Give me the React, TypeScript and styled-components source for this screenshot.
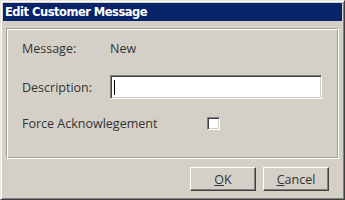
import styled, { createGlobalStyle } from "styled-components";

const GlobalStyle = createGlobalStyle`
	html, body {
		margin: 0;
		padding: 0;
		background: #d4d0c8;
	}
`;

const Window = styled.div`
	box-sizing: border-box;
	width: 345px;
	height: 200px;
	background: #d4d0c8;
	border-top: 1px solid #e8e6e1;
	border-left: 1px solid #e8e6e1;
	border-right: 1px solid #404040;
	border-bottom: 1px solid #404040;
	box-shadow: inset 1px 1px 0 #ffffff, inset -1px -1px 0 #808080;
	padding: 2px;
	display: flex;
	flex-direction: column;
	font-family: "Open Sans", "Noto Sans", sans-serif;
	font-size: 12.5px;
	color: #333333;
`;

const TitleBar = styled.div`
	height: 18px;
	background: #0a246a;
	color: #ffffff;
	font-family: "DejaVu Sans", "Liberation Sans", sans-serif;
	font-weight: bold;
	font-size: 11.5px;
	line-height: 18px;
	padding-left: 2px;
	letter-spacing: -0.5px;
`;

const Body = styled.div`
	flex: 1;
	display: flex;
	flex-direction: column;
	padding: 7px 3px 0 3px;
`;

const Panel = styled.div`
	box-sizing: border-box;
	height: 131px;
	border-top: 1px solid #a09d96;
	border-left: 1px solid #a09d96;
	border-right: 1px solid #ffffff;
	border-bottom: 1px solid #ffffff;
	box-shadow: inset 1px 1px 0 #ffffff, inset -1px -1px 0 #a09d96;
	padding: 7px 15px 0 15px;
	display: flex;
	flex-direction: column;
`;

const Row = styled.div<{ gap: number }>`
	display: flex;
	align-items: center;
	height: 24px;
	margin-top: ${(props) => props.gap}px;
`;

const Label = styled.span<{ width: number }>`
	width: ${(props) => props.width}px;
	flex-shrink: 0;
`;

const TextInput = styled.div`
	box-sizing: border-box;
	width: 212px;
	height: 24px;
	background: #ffffff;
	border-top: 1px solid #808080;
	border-left: 1px solid #808080;
	border-right: 1px solid #ffffff;
	border-bottom: 1px solid #ffffff;
	box-shadow: inset 1px 1px 0 #404040, inset -1px -1px 0 #d4d0c8;
	position: relative;
`;

const Caret = styled.span`
	position: absolute;
	left: 3px;
	top: 4px;
	width: 1px;
	height: 15px;
	background: #000000;
`;

const CheckBox = styled.div`
	box-sizing: border-box;
	width: 13px;
	height: 13px;
	margin-left: 46px;
	background: #ffffff;
	border-top: 1px solid #808080;
	border-left: 1px solid #808080;
	border-right: 1px solid #ffffff;
	border-bottom: 1px solid #ffffff;
	box-shadow: inset 1px 1px 0 #404040, inset -1px -1px 0 #d4d0c8;
`;

const ButtonRow = styled.div`
	display: flex;
	justify-content: flex-end;
	gap: 7px;
	padding: 8px 10px 0 0;
`;

const Button = styled.div`
	box-sizing: border-box;
	width: 66px;
	height: 24px;
	display: flex;
	align-items: center;
	justify-content: center;
	border-top: 1px solid #ffffff;
	border-left: 1px solid #ffffff;
	border-right: 1px solid #404040;
	border-bottom: 1px solid #404040;
	box-shadow: inset -1px -1px 0 #808080, inset 1px 1px 0 #d4d0c8;
	u {
		text-decoration: underline;
		text-underline-offset: 1px;
	}
`;

const App = () => {
	return (
		<>
			<GlobalStyle />
			<Window>
				<TitleBar>Edit Customer Message</TitleBar>
				<Body>
					<Panel>
						<Row gap={0}>
							<Label width={88}>Message:</Label>
							<span>New</span>
						</Row>
						<Row gap={15}>
							<Label width={88}>Description:</Label>
							<TextInput>
								<Caret />
							</TextInput>
						</Row>
						<Row gap={12}>
							<Label width={139}>Force Acknowlegement</Label>
							<CheckBox />
						</Row>
					</Panel>
					<ButtonRow>
						<Button>
							<span><u>O</u>K</span>
						</Button>
						<Button>
							<span><u>C</u>ancel</span>
						</Button>
					</ButtonRow>
				</Body>
			</Window>
		</>
	);
};

export default App;
